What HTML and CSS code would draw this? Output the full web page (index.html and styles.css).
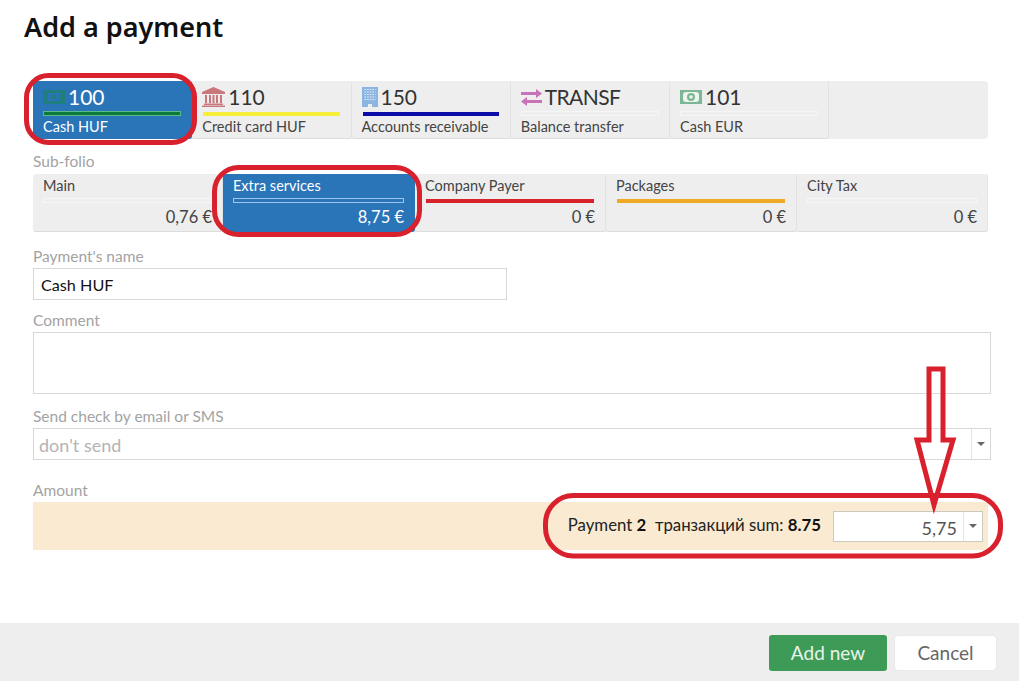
FILE: index.html
```html
<!DOCTYPE html>
<html lang="en">
<head>
<meta charset="utf-8">
<title>Add a payment</title>
<link rel="stylesheet" href="styles.css">
</head>
<body>
<div class="page">
  <div class="content">
    <h1 class="title">Add a payment</h1>
    <div class="strip methods">
      <div class="tab method active">
        <div class="head">
          <svg class="ico" width="22" height="14" viewBox="0 0 22 14"><path fill="#1f7f80" fill-rule="evenodd" d="M0 0h22v14H0zM5 3v8h12V3z"/><circle cx="11" cy="7" r="2.500" fill="#1f7f80"/></svg>
          <span class="num">100</span>
        </div>
        <div class="bar bar-green"></div>
        <div class="name">Cash HUF</div>
      </div>
      <div class="tab method">
        <div class="head">
          <svg class="ico" width="23" height="20" viewBox="0 0 23 20"><path fill="#c9777c" d="M11.500 0 23 5v2H0V5zM3 8h2v8H3zM7 8h2v8H7zM10.500 8h2v8h-2zM14 8h2v8h-2zM18 8h2v8h-2zM2 16.500h19V18H2zM0 18.500h23V20H0z"/></svg>
          <span class="num">110</span>
        </div>
        <div class="bar bar-yellow"></div>
        <div class="name">Credit card HUF</div>
      </div>
      <div class="tab method">
        <div class="head">
          <svg class="ico" width="16" height="20" viewBox="0 0 16 20"><path fill="#8db5e2" d="M0 0h16v20h-6v-3H6v3H0z"/><path stroke="#e3edf8" stroke-width="1.200" stroke-dasharray="1.600 1" d="M2.500 2.500h11M2.500 5h11M2.500 7.500h11M2.500 10h11M2.500 12.500h11"/></svg>
          <span class="num">150</span>
        </div>
        <div class="bar bar-blue"></div>
        <div class="name">Accounts receivable</div>
      </div>
      <div class="tab method">
        <div class="head">
          <svg class="ico" width="21" height="17" viewBox="0 0 21 17"><path fill="#c873b8" d="M0 3h15V0l6 4.500L15 9V6H0zM21 11H6V8l-6 4.500L6 17v-3h15z"/></svg>
          <span class="num num-wide">TRANSF</span>
        </div>
        <div class="bar"></div>
        <div class="name">Balance transfer</div>
      </div>
      <div class="tab method">
        <div class="head">
          <svg class="ico" width="22" height="14" viewBox="0 0 22 14"><rect width="22" height="14" fill="#7cb795"/><rect x="3" y="2" width="16" height="10" rx="3" fill="#eef5ef"/><circle cx="11" cy="7" r="4" fill="#7cb795"/><circle cx="11" cy="7" r="1.800" fill="#eef5ef"/></svg>
          <span class="num">101</span>
        </div>
        <div class="bar"></div>
        <div class="name">Cash EUR</div>
      </div>
    </div>

    <div class="label label-sub">Sub-folio</div>
    <div class="strip folios">
      <div class="tab folio folio-first">
        <div class="name">Main</div>
        <div class="bar"></div>
        <div class="sum">0,76 €</div>
      </div>
      <div class="tab folio active folio-wide">
        <div class="name">Extra services</div>
        <div class="bar"></div>
        <div class="sum">8,75 €</div>
      </div>
      <div class="tab folio">
        <div class="name">Company Payer</div>
        <div class="bar bar-red"></div>
        <div class="sum">0 €</div>
      </div>
      <div class="tab folio">
        <div class="name">Packages</div>
        <div class="bar bar-orange"></div>
        <div class="sum">0 €</div>
      </div>
      <div class="tab folio">
        <div class="name">City Tax</div>
        <div class="bar"></div>
        <div class="sum">0 €</div>
      </div>
    </div>

    <div class="label label-name">Payment's name</div>
    <div class="field field-name">Cash HUF</div>

    <div class="label label-comment">Comment</div>
    <div class="field field-comment"></div>

    <div class="label label-send">Send check by email or SMS</div>
    <div class="field field-select">
      <span class="placeholder">don't send</span>
      <span class="drop"><i class="caret"></i></span>
    </div>

    <div class="label label-amount">Amount</div>
    <div class="amount">
      <div class="amount-text">Payment <b>2</b>&nbsp; транзакций sum: <b>8.75</b></div>
      <div class="amount-input">
        <span class="amount-value">5,75</span>
        <span class="drop"><i class="caret"></i></span>
      </div>
    </div>
  </div>

  <div class="footer">
    <div class="btn btn-add">Add new</div>
    <div class="btn btn-cancel">Cancel</div>
  </div>
</div>

<svg class="marks" width="1019" height="681" viewBox="0 0 1019 681" fill="none" stroke="#d9212e" stroke-width="5">
  <rect x="26.500" y="75.500" width="168" height="67" rx="22"/>
  <rect x="214.500" y="167.500" width="205" height="67" rx="24"/>
  <rect x="545.500" y="495.500" width="455" height="60.500" rx="28"/>
  <path d="M929 369h14v71h10l-19 65-17-65h12z"/>
</svg>
</body>
</html>
```

FILE: styles.css
```css
* { box-sizing: border-box; }
html, body { margin: 0; padding: 0; background: #fff; }
body { font-family: "Lato", "Noto Sans", sans-serif; font-size: 15px; color: #444; overflow: hidden; }

.page { position: relative; width: 1019px; height: 681px; display: flex; flex-direction: column; }
.content { flex: 1; padding: 0 28px 0 33px; }

.title { margin: 0 0 0 -9px; height: 81px; padding-top: 10px; font-family: "Noto Sans", sans-serif; font-size: 27px; line-height: 34px; font-weight: 600; color: #111; }

.strip { width: 955px; height: 58px; background: #eee; border-radius: 4px; display: flex; }
.tab { height: 58px; padding: 0 10px; border-right: 1px solid #e2e2e2; border-bottom: 1px solid #dcdcdc; border-radius: 3px; color: #444; }
.method { width: 159.250px; }
.folio { width: 191px; }
.folio-first { width: 190px; }
.folio-wide { width: 192px; }
.tab.active { background: #2a74b8; color: #fff; border-color: #2a74b8; }

.head { display: flex; align-items: center; gap: 3px; height: 28px; margin-top: 2px; }
.num { font-size: 21px; line-height: 28px; color: #333; }
.num-wide { letter-spacing: -0.600px; }
.active .num { color: #fff; }
.bar { height: 5px; border: 1px solid #f6f6f6; }
.active .bar { border-color: #9cc4ec; }
.active .bar-green { background: #0c7a3a; border-color: #5cb98a; }
.bar-yellow, .bar-blue, .bar-red, .bar-orange { height: 4px; border-width: 0 1px; border-color: transparent; background-clip: padding-box; }
.bar-yellow { background-color: #f7ee3a; margin-top: 1px; }
.bar-blue { background-color: #0c0ca8; margin-top: 1px; }
.bar-red { background-color: #d9232b; }
.bar-orange { background-color: #f0a926; }

.method .name { font-size: 14.500px; line-height: 20px; margin-top: 1px; }
.folio .name { font-size: 14.500px; line-height: 20px; margin-top: 2px; }
.folio .bar { margin-top: 2px; }
.folio .bar-red, .folio .bar-orange { margin-top: 3px; }
.sum { text-align: right; font-size: 16.500px; line-height: 22px; margin-top: 3px; }

.label { font-size: 15.500px; line-height: 17px; color: #a3a3a3; margin-bottom: 3px; }
.label-sub { margin-top: 14px; margin-bottom: 4px; }
.label-name { margin-top: 16px; }
.label-comment { margin-top: 12px; }
.label-send { margin-top: 14px; }
.label-amount { margin-top: 22px; }

.field { border: 1px solid #d8d8d8; background: #fff; }
.field-name { width: 474px; height: 32px; padding-left: 7px; font-size: 16.200px; line-height: 32px; color: #111; }
.field-comment { width: 958px; height: 62px; }
.field-select { width: 958px; height: 32px; display: flex; justify-content: space-between; padding-left: 5px; }
.placeholder { font-size: 18px; line-height: 33px; color: #b4b4b4; }

.drop { width: 19px; border-left: 1px solid #e4e4e4; display: flex; align-items: center; justify-content: center; }
.caret { width: 0; height: 0; border: 4px solid transparent; border-top: 4px solid #666; border-bottom: 0; }

.amount { width: 955px; height: 48px; background: #f9ead1; display: flex; align-items: center; justify-content: flex-end; gap: 12px; padding-right: 5px; }
.amount-text { font-size: 16.800px; line-height: 20px; padding-bottom: 2px; color: #222; }
.amount-text b { font-weight: 700; color: #111; }
.amount-input { width: 150px; height: 31px; background: #fff; border: 1px solid #c9c9c0; display: flex; justify-content: flex-end; }
.amount-value { font-size: 18px; line-height: 33px; color: #555; padding-right: 6px; }

.footer { height: 58px; background: #eee; display: flex; justify-content: flex-end; align-items: center; gap: 8px; padding: 2px 23px 0 0; }
.btn { height: 36px; font-size: 19px; line-height: 36px; text-align: center; border-radius: 3px; }
.btn-add { width: 118px; background: #3e9a57; color: #e6f5ea; }
.btn-cancel { width: 101px; height: 34px; line-height: 34px; background: #fff; color: #666; box-shadow: 0 0 1px #ccc; }

.marks { position: absolute; left: 0; top: 0; pointer-events: none; }
```
